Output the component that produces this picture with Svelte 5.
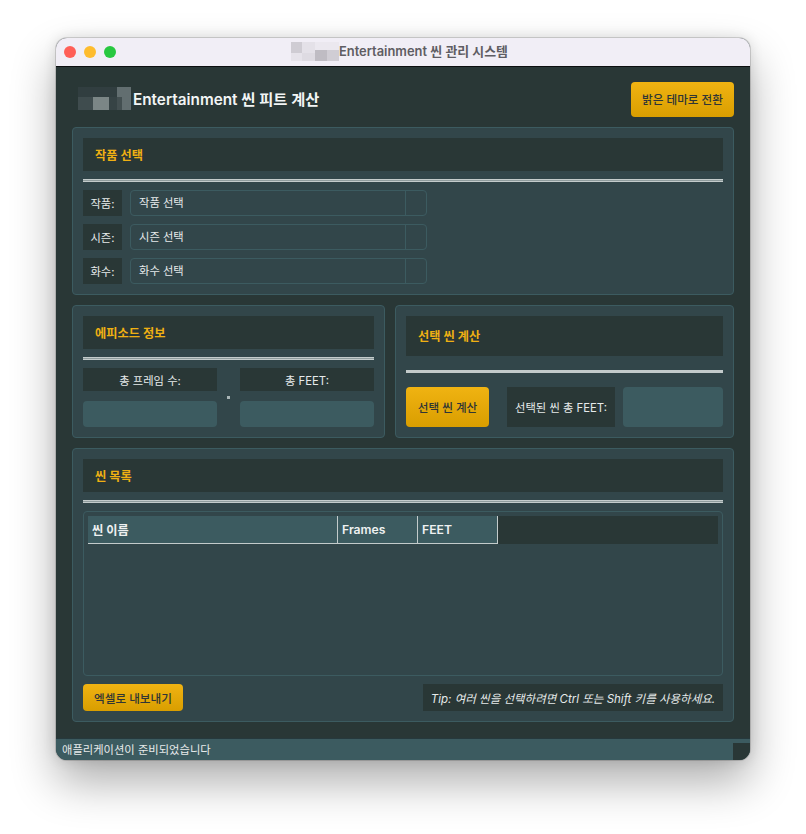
<script>
  const rows = [
    ['작품:', '작품 선택'],
    ['시즌:', '시즌 선택'],
    ['화수:', '화수 선택']
  ];
</script>

<div class="stage">
  <div class="window">
    <div class="titlebar">
      <div class="lights">
        <span class="light red"></span><span class="light amber"></span><span class="light green"></span>
      </div>
      <div class="wintitle">
        <svg class="mosaic" width="48" height="19" viewBox="0 0 48 19" aria-hidden="true">
          <rect width="48" height="19" fill="#f0edf5"/>
          <rect x="0" y="0" width="11" height="11" fill="#cfccd3"/>
          <rect x="11" y="0" width="13" height="11" fill="#e4e1e8"/>
          <rect x="24" y="0" width="24" height="8" fill="#ebe8ef"/>
          <rect x="0" y="11" width="11" height="8" fill="#e6e3ea"/>
          <rect x="11" y="11" width="13" height="8" fill="#dedbe2"/>
          <rect x="24" y="8" width="12" height="11" fill="#bfbcc3"/>
          <rect x="36" y="8" width="12" height="11" fill="#d0cdd4"/>
        </svg>
        <span>Entertainment 씬 관리 시스템</span>
      </div>
    </div>

    <div class="content">
      <header class="apphead">
        <div class="brand">
          <svg class="mosaic" width="53" height="23" viewBox="0 0 53 23" aria-hidden="true">
            <rect width="53" height="23" fill="#293637"/>
            <rect x="0" y="0" width="39" height="10" fill="#313e40"/>
            <rect x="0" y="10" width="15" height="13" fill="#3f4c4e"/>
            <rect x="15" y="10" width="16" height="13" fill="#7b8686"/>
            <rect x="31" y="10" width="8" height="13" fill="#364345"/>
            <rect x="39" y="0" width="14" height="23" fill="#626e70"/>
            <rect x="39" y="10" width="5" height="13" fill="#434f51"/>
          </svg>
          <h1>Entertainment 씬 피트 계산</h1>
        </div>
        <button class="gold theme">밝은 테마로 전환</button>
      </header>

      <section class="card">
        <h2 class="cardtitle">작품 선택</h2>
        <div class="sep"></div>
        <div class="rows">
          {#each rows as [label, value]}
            <div class="row">
              <span class="label">{label}</span>
              <div class="combo"><span class="ctext">{value}</span><span class="arrow"></span></div>
            </div>
          {/each}
        </div>
      </section>

      <div class="two">
        <section class="card episode">
          <h2 class="cardtitle">에피소드 정보</h2>
          <div class="sep"></div>
          <div class="epgrid">
            <div class="epcol">
              <span class="label center">총 프레임 수:</span>
              <div class="value"></div>
            </div>
            <span class="dot"></span>
            <div class="epcol">
              <span class="label center">총 FEET:</span>
              <div class="value"></div>
            </div>
          </div>
        </section>

        <section class="card calc">
          <h2 class="cardtitle tall">선택 씬 계산</h2>
          <div class="sep wide"></div>
          <div class="calcrow">
            <button class="gold calcbtn">선택 씬 계산</button>
            <span class="label calclabel">선택된 씬 총 FEET:</span>
            <div class="value calcval"></div>
          </div>
        </section>
      </div>

      <section class="card list">
        <h2 class="cardtitle">씬 목록</h2>
        <div class="sep"></div>
        <div class="tablewrap">
          <div class="thead">
            <div class="th name">씬 이름</div>
            <div class="th frames">Frames</div>
            <div class="th feet">FEET</div>
            <div class="thfill"></div>
          </div>
        </div>
        <div class="listfoot">
          <button class="gold export">엑셀로 내보내기</button>
          <span class="tip">Tip: 여러 씬을 선택하려면 Ctrl 또는 Shift 키를 사용하세요.</span>
        </div>
      </section>
    </div>

    <footer class="status">
      <span>애플리케이션이 준비되었습니다</span>
      <span class="grip"></span>
    </footer>
  </div>
</div>

<style>
  :global(body) {
    margin: 0;
    background: #ffffff;
  }
  .stage {
    padding: 38px 56px 74px;
    height: 722px;
    font-family: Inter, "Noto Sans CJK KR", sans-serif;
    font-size: 11.3px;
    color: #eef1f1;
  }
  .window {
    height: 722px;
    box-sizing: border-box;
    border-radius: 11px;
    overflow: hidden;
    display: flex;
    flex-direction: column;
    background: #293736;
    box-shadow: 0 0 0 1px rgba(0, 0, 0, 0.14), 0 22px 45px rgba(0, 0, 0, 0.32), 0 0 14px rgba(0, 0, 0, 0.12);
  }
  .titlebar {
    height: 29px;
    flex: none;
    box-sizing: border-box;
    background: #f1eef6;
    border-bottom: 1px solid #0c0f10;
    display: flex;
    align-items: center;
    position: relative;
  }
  .lights {
    display: flex;
    gap: 8px;
    padding-left: 8px;
  }
  .light {
    width: 12px;
    height: 12px;
    border-radius: 50%;
  }
  .red { background: #ff5f57; }
  .amber { background: #febc2e; }
  .green { background: #28c840; }
  .wintitle {
    position: absolute;
    left: 235px;
    top: 4px;
    display: flex;
    align-items: center;
    color: #5f5d63;
    font-size: 12.9px;
    font-weight: 600;
    height: 19px;
  }
  .wintitle span { position: relative; top: -1px; }
  .mosaic { display: block; flex: none; }

  .content {
    flex: 1;
    min-height: 0;
    padding: 0 16px;
    display: flex;
    flex-direction: column;
  }
  .apphead {
    height: 60px;
    flex: none;
    display: flex;
    align-items: center;
    justify-content: space-between;
  }
  .brand {
    display: flex;
    align-items: center;
    gap: 2px;
    padding-left: 6px;
    margin-top: 2px;
  }
  h1 {
    margin: 0;
    font-size: 15.3px;
    font-weight: 600;
    color: #f2f5f5;
  }
  .gold {
    border: none;
    padding: 0;
    background: linear-gradient(#f0b312, #d99e00);
    color: #2f3536;
    border-radius: 4px;
    font: 500 11.6px Inter, "Noto Sans CJK KR", sans-serif;
    display: block;
  }
  .theme {
    width: 103px;
    height: 35px;
    margin-top: 4px;
  }
  .card {
    box-sizing: border-box;
    background: #32464a;
    border: 1px solid #3c5b60;
    border-radius: 4px;
    padding: 10px;
  }
  .cardtitle {
    margin: 0;
    height: 33px;
    background: #293736;
    color: #efb013;
    font-size: 12.2px;
    font-weight: 600;
    display: flex;
    align-items: center;
    padding-left: 12px;
  }
  .cardtitle.tall { height: 40px; padding-bottom: 1px; box-sizing: border-box; }
  .sep {
    height: 3px;
    margin: 8px 0;
    background: #8f9c9d;
    border-top: 1px solid #c3cbcb;
    border-bottom: 1px solid #c3cbcb;
    box-sizing: border-box;
  }
  .sep.wide { margin: 14px 0; background: #c3cbcb; }
  .rows {
    display: flex;
    flex-direction: column;
    gap: 8px;
  }
  .row {
    display: flex;
    gap: 8px;
    height: 26px;
  }
  .label {
    background: #293736;
    color: #e6eaea;
    display: flex;
    align-items: center;
    justify-content: center;
    width: 39px;
  }
  .combo {
    width: 297px;
    box-sizing: border-box;
    border: 1px solid #3c5b60;
    border-radius: 4px;
    display: flex;
    align-items: center;
    padding-bottom: 2px;
  }
  .ctext {
    flex: 1;
    padding-left: 8px;
    color: #e6eaea;
  }
  .arrow {
    width: 20px;
    align-self: stretch;
    margin-bottom: -2px;
    border-left: 1px solid #3c5b60;
  }

  .two {
    display: flex;
    gap: 10px;
    margin-top: 10px;
  }
  .episode { width: 313px; height: 133px; }
  .calc { width: 339px; height: 133px; }
  .epgrid {
    display: flex;
    justify-content: space-between;
    position: relative;
  }
  .epcol {
    width: 134px;
    display: flex;
    flex-direction: column;
    gap: 10px;
  }
  .label.center {
    width: auto;
    height: 23px;
  }
  .value {
    height: 26px;
    background: #3c5b60;
    border-radius: 4px;
  }
  .dot {
    position: absolute;
    left: 144px;
    top: 28px;
    width: 3px;
    height: 3px;
    background: #a9b5b6;
  }
  .calcrow {
    display: flex;
    height: 40px;
  }
  .calcbtn {
    width: 83px;
    height: 40px;
  }
  .label.calclabel {
    width: 108px;
    margin-left: 18px;
  }
  .calcval {
    width: 100px;
    height: 40px;
    margin-left: 8px;
  }

  .list {
    margin-top: 10px;
    height: 274px;
  }
  .tablewrap {
    height: 165px;
    box-sizing: border-box;
    border: 1px solid #3c5b60;
    border-radius: 4px;
    padding: 4px;
  }
  .thead {
    display: flex;
    height: 28px;
  }
  .th {
    box-sizing: border-box;
    background: #3c5b60;
    border-right: 1px solid #c3cbcb;
    border-bottom: 1px solid #c3cbcb;
    display: flex;
    align-items: center;
    padding-left: 4px;
    font-weight: 600;
    font-size: 12.2px;
    color: #eef1f1;
  }
  .name { width: 250px; }
  .frames, .feet { width: 80px; }
  .thfill {
    flex: 1;
    background: #293736;
  }
  .listfoot {
    display: flex;
    justify-content: space-between;
    margin-top: 8px;
    height: 27px;
  }
  .export {
    width: 100px;
    height: 27px;
  }
  .tip {
    width: 300px;
    background: #293736;
    display: flex;
    align-items: center;
    justify-content: center;
    font-style: italic;
    font-size: 11.5px;
    color: #e6eaea;
  }
  .status {
    height: 22px;
    flex: none;
    box-sizing: border-box;
    background: #3c5b60;
    border-top: 1px solid #26393d;
    display: flex;
    align-items: flex-end;
    justify-content: space-between;
    padding-left: 6px;
    color: #e6eaea;
    margin-top: auto;
  }
  .status span:first-child { line-height: 20px; }
  .grip {
    width: 17px;
    height: 17px;
    background: #293736;
  }
</style>
